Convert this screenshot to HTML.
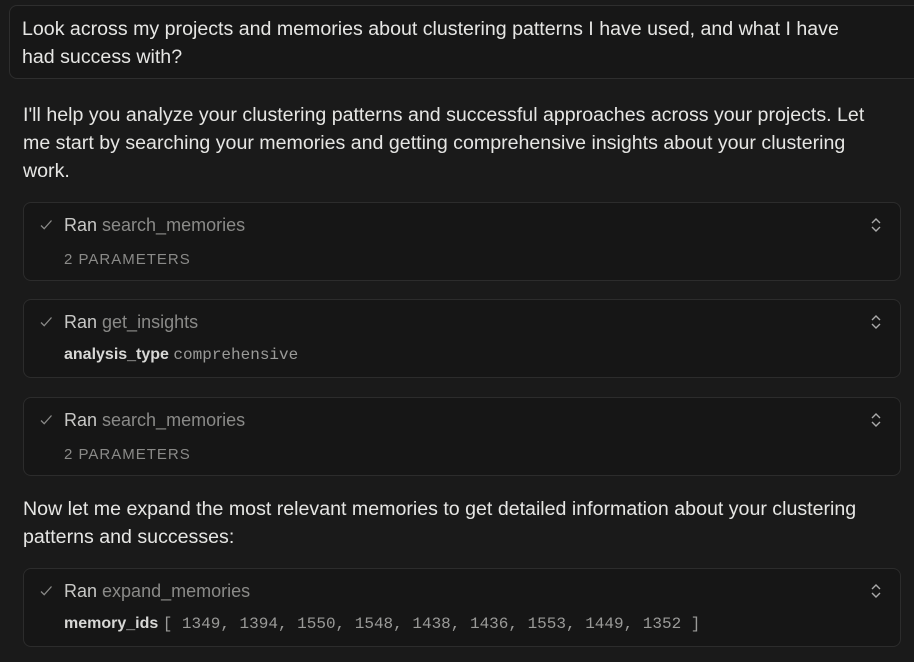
<!DOCTYPE html>
<html><head><style>
body{margin:0;background:#1a1a1a;width:914px;height:662px;overflow:hidden;font-family:"Liberation Sans",sans-serif;color:#e8e8e6;position:relative}
.u{position:absolute;left:9px;top:5px;width:930px;height:74px;border:1px solid #2e2e2e;border-radius:8px;background:#171717;box-sizing:border-box}
.t{position:absolute;font-size:19.6px;line-height:28px;white-space:nowrap;color:#e6e6e4}
.c{position:absolute;left:23px;width:878px;height:79px;border:1px solid #2c2c2c;border-radius:8px;background:#161616;box-sizing:border-box}
.c .r{position:absolute;left:40px;top:12px;font-size:18px;color:#c8c8c6;white-space:nowrap}
.c .r span{color:#8a8a88}
.c .ck{position:absolute;left:15px;top:15px;width:14px;height:14px}
.c .p{position:absolute;left:40px;top:48px;font-size:15px;letter-spacing:1px;color:#8a8a88}
.c .m{position:absolute;left:40px;top:46px;font-size:16px;color:#d8d8d6;white-space:nowrap}
.c .m b{font-weight:bold}
.c .m span{font-family:"Liberation Mono",monospace;color:#9a9a98;font-size:16px}
.c svg.v{position:absolute;right:18px;top:14px}
</style></head><body>
<div class="u"></div>
<div class="t" style="left:22px;top:15px">Look across my projects and memories about clustering patterns I have used, and what I have<br>had success with?</div>
<div class="t" style="left:23px;top:101px">I'll help you analyze your clustering patterns and successful approaches across your projects. Let<br>me start by searching your memories and getting comprehensive insights about your clustering<br>work.</div>

<div class="c" style="top:202px"><svg class="ck" viewBox="0 0 14 14"><path d="M2 7.5l3.2 3.2L12.5 2.5" stroke="#8a8a88" stroke-width="1.3" fill="none"/></svg><div class="r">Ran <span>search_memories</span></div><div class="p">2 PARAMETERS</div><svg class="v" width="12" height="16" viewBox="0 0 12 16"><path d="M2 6l4-4 4 4M2 10l4 4 4-4" stroke="#aaa" stroke-width="1.4" fill="none"/></svg></div>

<div class="c" style="top:299px"><svg class="ck" viewBox="0 0 14 14"><path d="M2 7.5l3.2 3.2L12.5 2.5" stroke="#8a8a88" stroke-width="1.3" fill="none"/></svg><div class="r">Ran <span>get_insights</span></div><div class="m"><b>analysis_type</b> <span>comprehensive</span></div><svg class="v" width="12" height="16" viewBox="0 0 12 16"><path d="M2 6l4-4 4 4M2 10l4 4 4-4" stroke="#aaa" stroke-width="1.4" fill="none"/></svg></div>

<div class="c" style="top:397px"><svg class="ck" viewBox="0 0 14 14"><path d="M2 7.5l3.2 3.2L12.5 2.5" stroke="#8a8a88" stroke-width="1.3" fill="none"/></svg><div class="r">Ran <span>search_memories</span></div><div class="p">2 PARAMETERS</div><svg class="v" width="12" height="16" viewBox="0 0 12 16"><path d="M2 6l4-4 4 4M2 10l4 4 4-4" stroke="#aaa" stroke-width="1.4" fill="none"/></svg></div>

<div class="t" style="left:23px;top:495px">Now let me expand the most relevant memories to get detailed information about your clustering<br>patterns and successes:</div>

<div class="c" style="top:568px"><svg class="ck" viewBox="0 0 14 14"><path d="M2 7.5l3.2 3.2L12.5 2.5" stroke="#8a8a88" stroke-width="1.3" fill="none"/></svg><div class="r">Ran <span>expand_memories</span></div><div class="m"><b>memory_ids</b> <span>[ 1349, 1394, 1550, 1548, 1438, 1436, 1553, 1449, 1352 ]</span></div><svg class="v" width="12" height="16" viewBox="0 0 12 16"><path d="M2 6l4-4 4 4M2 10l4 4 4-4" stroke="#aaa" stroke-width="1.4" fill="none"/></svg></div>
</body></html>
